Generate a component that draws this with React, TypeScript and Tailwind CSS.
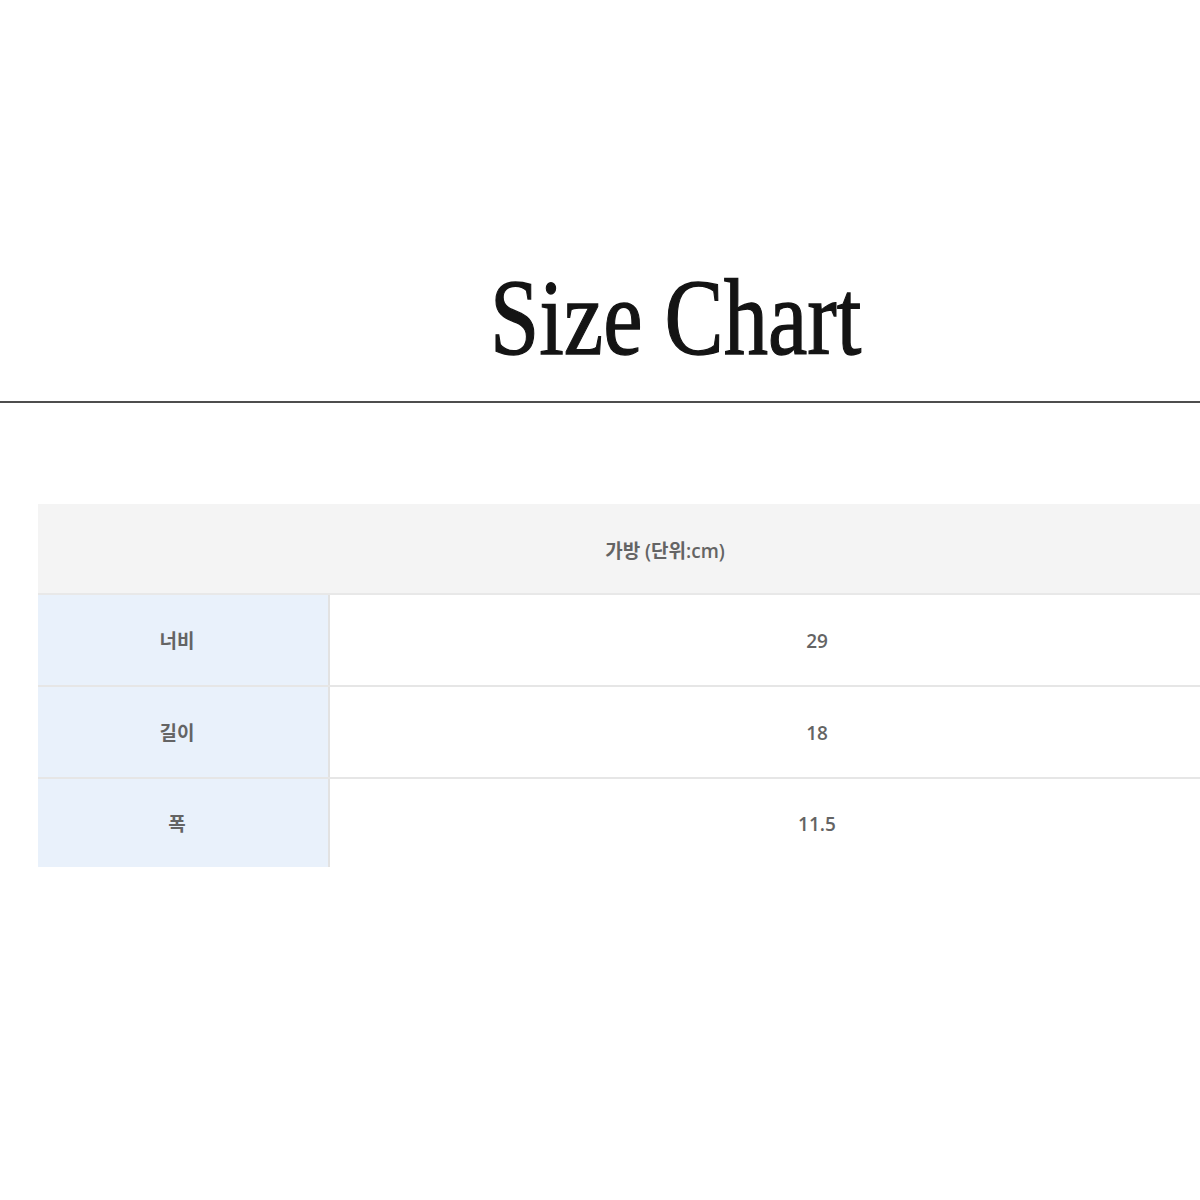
const rows = [
  { label: "너비", value: "29" },
  { label: "길이", value: "18" },
  { label: "폭", value: "11.5" },
];

const sans = "font-['Open_Sans','Noto_Sans_CJK_KR',sans-serif]";

export default function App() {
  return (
    <div className="w-[1200px] min-h-[1200px] overflow-hidden bg-white">
      {/* Title */}
      <div className="pt-[264px] pl-[490px]">
        <h1 className="inline-block origin-left scale-x-[0.82] whitespace-nowrap font-['Liberation_Serif',serif] text-[108px] font-normal leading-none text-[#141414] [-webkit-text-stroke:1.3px_#141414]">
          Size Chart
        </h1>
      </div>
      <div className="mt-[29px] h-[2px] w-full bg-[#4d4d4d]" />

      {/* Table */}
      <div className={`mt-[101px] ml-[38px] w-[1266px] ${sans} font-semibold text-[#646464]`}>
        <div className="flex h-[91px] items-center justify-center border-b-2 border-[#e8e8e8] bg-[#f4f4f4] pr-[12px] pt-[5px] text-[19px]">
          가방 (단위:cm)
        </div>
        {rows.map((r, i) => (
          <div
            key={r.label}
            className={`flex ${i === rows.length - 1 ? "h-[88px]" : "h-[92px] border-b-2 border-[#e6e6e6]"}`}
          >
            <div className="flex w-[292px] items-center justify-center border-r-2 border-[#e2e2e2] bg-[#e9f1fb] pr-[12px] pt-[3px] text-[19px]">
              {r.label}
            </div>
            <div className="flex flex-1 items-center justify-center pt-[3px] text-[19px]">
              {r.value}
            </div>
          </div>
        ))}
      </div>
    </div>
  );
}
